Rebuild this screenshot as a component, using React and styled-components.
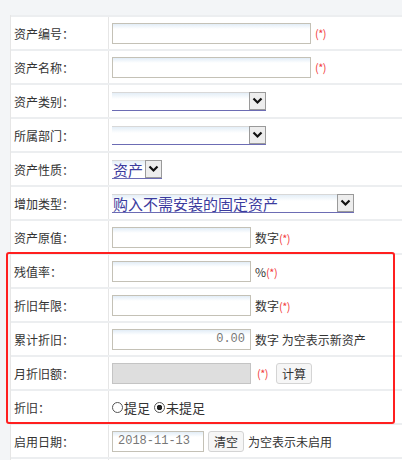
import React from 'react'
import styled, { createGlobalStyle } from 'styled-components';

const GlobalStyle = createGlobalStyle`
    body {
        margin: 0;
        background: #f3f5f7;
        font-family: "Noto Sans CJK SC", "DejaVu Sans", sans-serif;
        font-size: 12px;
        color: #333;
    }
`

const Page = styled.div`
    position: relative;
    padding: 15px 0 0 10px;
    width: 402px;
    height: 460px;
    box-sizing: border-box;
    overflow: hidden;
`

const Table = styled.div`
    background: #ffffff;
    border-left: 1px solid #e6e6e6;
`

const Row = styled.div`
    display: grid;
    grid-template-columns: 98px 1fr;
    height: 34px;
    box-sizing: border-box;
    border-top: 2px solid #eceef0;
`

const Label = styled.div`
    display: flex;
    align-items: center;
    padding-left: 3px;
    border-right: 1px solid #e6e6e6;
    white-space: nowrap;
`

const Cell = styled.div`
    display: flex;
    align-items: center;
    padding-left: 3px;
    gap: ${p => p.$gap || 4}px;
    white-space: nowrap;
`

const Input = styled.div`
    width: ${p => p.$w}px;
    height: 21px;
    box-sizing: border-box;
    border: 1px solid #c4c1b6;
    background: ${p => p.$disabled ? '#dedede' : 'linear-gradient(#e2edf7, #ffffff 5px)'};
    border-color: ${p => p.$disabled ? '#c4c4c4' : '#c4c1b6'};
    display: flex;
    align-items: center;
    justify-content: ${p => p.$right ? 'flex-end' : 'flex-start'};
    padding: 0 5px;
    font-family: "Liberation Mono", "DejaVu Sans Mono", monospace;
    font-size: 12px;
    color: #777;
`

const Select = styled.div`
    width: ${p => p.$w}px;
    height: 19px;
    box-sizing: border-box;
    border-top: 1px solid #d8d8d8;
    border-bottom: 1px solid #6c6cb4;
    background: linear-gradient(#e4eef7, #ffffff 6px);
    display: flex;
    align-items: center;
    font-size: 15px;
    color: #3b3b9e;
`

const SelectText = styled.span`
    flex: 1;
    padding-left: 1px;
    line-height: 17px;
    height: 17px;
`

const Arrow = styled.span`
    width: 17px;
    height: 18px;
    margin-top: -1px;
    box-sizing: border-box;
    border: 1px solid #9a9a9a;
    background: #ededed;
    display: flex;
    align-items: center;
    justify-content: center;
`

const Required = styled.span`
    color: #f23c3c;
    font-size: 11px;
    letter-spacing: -0.5px;
`

const Hint = styled.span`
    color: #333;
`

const Button = styled.button`
    height: 21px;
    padding: 0 5px;
    border: 1px solid #d4d4d4;
    border-radius: 3px;
    background: #f6f6f6;
    font-family: inherit;
    font-size: 12px;
    color: #333;
    margin-left: ${p => p.$ml || 0}px;
`

const Radio = styled.span`
    display: inline-flex;
    align-items: center;
    font-size: 13px;
    &::before {
        content: "";
        width: 11px;
        height: 11px;
        border: 1px solid #555;
        border-radius: 50%;
        box-sizing: border-box;
        margin-right: 1px;
        background: ${p => p.$checked ? 'radial-gradient(circle, #222 0 2.5px, #fff 3px)' : '#fff'};
    }
`

const Highlight = styled.div`
    position: absolute;
    left: 6px;
    top: 252px;
    width: 389px;
    height: 172px;
    box-sizing: border-box;
    border: 2px solid #ff1f1f;
    border-radius: 3px;
    pointer-events: none;
`

const Chevron = () => (
    <svg width="11" height="8" viewBox="0 0 11 8">
        <path d="M1.5 1.5 L5.5 5.5 L9.5 1.5" fill="none" stroke="#111" strokeWidth="2.2" />
    </svg>
)

const Star = () => <Required>(*)</Required>

const App = () => {
    return (
        <Page>
            <GlobalStyle />
            <Table>
                <Row>
                    <Label>资产编号：</Label>
                    <Cell><Input $w={199} /><Star /></Cell>
                </Row>
                <Row>
                    <Label>资产名称：</Label>
                    <Cell><Input $w={199} /><Star /></Cell>
                </Row>
                <Row>
                    <Label>资产类别：</Label>
                    <Cell><Select $w={154}><SelectText /><Arrow><Chevron /></Arrow></Select></Cell>
                </Row>
                <Row>
                    <Label>所属部门：</Label>
                    <Cell><Select $w={154}><SelectText /><Arrow><Chevron /></Arrow></Select></Cell>
                </Row>
                <Row>
                    <Label>资产性质：</Label>
                    <Cell><Select $w={50}><SelectText>资产</SelectText><Arrow><Chevron /></Arrow></Select></Cell>
                </Row>
                <Row>
                    <Label>增加类型：</Label>
                    <Cell><Select $w={242}><SelectText>购入不需安装的固定资产</SelectText><Arrow><Chevron /></Arrow></Select></Cell>
                </Row>
                <Row>
                    <Label>资产原值：</Label>
                    <Cell><Input $w={139} /><Hint>数字<Star /></Hint></Cell>
                </Row>
                <Row>
                    <Label>残值率：</Label>
                    <Cell><Input $w={139} /><Hint>%<Star /></Hint></Cell>
                </Row>
                <Row>
                    <Label>折旧年限：</Label>
                    <Cell><Input $w={139} /><Hint>数字<Star /></Hint></Cell>
                </Row>
                <Row>
                    <Label>累计折旧：</Label>
                    <Cell><Input $w={139} $right>0.00</Input><Hint>数字 为空表示新资产</Hint></Cell>
                </Row>
                <Row>
                    <Label>月折旧额：</Label>
                    <Cell $gap={6}><Input $w={139} $disabled /><Star /><Button $ml={2}>计算</Button></Cell>
                </Row>
                <Row>
                    <Label>折旧：</Label>
                    <Cell $gap={4}><Radio>提足</Radio><Radio $checked>未提足</Radio></Cell>
                </Row>
                <Row>
                    <Label>启用日期：</Label>
                    <Cell $gap={4}><Input $w={92}>2018-11-13</Input><Button>清空</Button><Hint>为空表示未启用</Hint></Cell>
                </Row>
                <Row>
                    <Label />
                    <Cell />
                </Row>
            </Table>
            <Highlight />
        </Page>
    )
}

export default App;
